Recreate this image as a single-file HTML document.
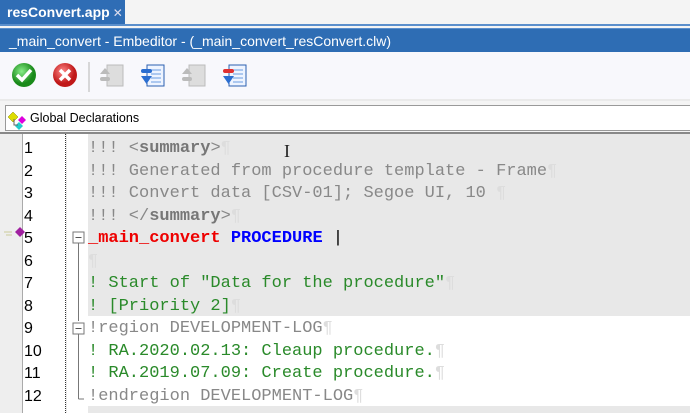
<!DOCTYPE html>
<html><head><meta charset="utf-8"><style>
*{margin:0;padding:0;box-sizing:border-box}
body{width:690px;height:413px;overflow:hidden;background:#f4f4f4;font-family:"Liberation Sans",sans-serif;position:relative}
.abs{position:absolute}
.tab{left:0;top:0;width:125px;height:25px;background:#2f6db5;color:#fff;font-weight:bold;font-size:14px;line-height:25px;padding-left:7px;white-space:nowrap;overflow:hidden}
.tab span{font-weight:normal;font-size:12px;margin-left:3px;color:#dde}
.title{left:0;top:28px;width:690px;height:24px;background:#2e6db4;color:#fff;font-size:14px;line-height:24px;padding-left:9px;border-top:1px solid #5b8fcc}
.tb{left:0;top:52px;width:690px;height:49px;background:#f8f8fc;border-bottom:2px solid #eaeaea}
.combo{left:5px;top:105px;width:690px;height:26px;background:#fff;border:1px solid #999;border-right:none;font-size:12.5px;line-height:24px;padding-left:24px}
.ed{left:0;top:132px;width:690px;height:281px;background:#e8e8e8;border-top:2px solid #888}
.mk{left:0;top:134px;width:23px;height:279px;background:#eeeeee;border-right:1px solid #aaa}
.ln{left:23px;top:134px;width:43px;height:279px;background:#fff;border-right:1px dotted #333}
.fd{left:67px;top:134px;width:21px;height:279px;background:#fff}
.white{left:88px;top:316px;width:602px;height:90px;background:#fff}
.row{position:absolute;height:22.5px;line-height:22.5px;white-space:pre}
.num{left:24px;font-size:16px;color:#000}
.code{left:88px;font-family:"Liberation Mono",monospace;font-size:17px;color:#888}
.g{color:#2a8a2a}.r{color:#e00;font-weight:bold}.b{color:#00f;font-weight:bold}.k{font-weight:bold;color:#777}.p{color:#ddd}
</style></head><body>
<div class="abs tab">resConvert.app<span>✕</span></div>
<div class="abs" style="left:0;top:24px;width:690px;height:2px;background:#5b8fcc"></div>
<div class="abs title">_main_convert - Embeditor - (_main_convert_resConvert.clw)</div>
<div class="abs tb">
<svg width="260" height="49">
<defs><radialGradient id="gg" cx="40%" cy="35%"><stop offset="0" stop-color="#8e8"/><stop offset="1" stop-color="#1a8a1a"/></radialGradient>
<radialGradient id="rg" cx="40%" cy="35%"><stop offset="0" stop-color="#f88"/><stop offset="1" stop-color="#c01818"/></radialGradient></defs>
<circle cx="24" cy="23" r="12" fill="url(#gg)"/><path d="M17 23l5 5 9-10" stroke="#fff" stroke-width="3.5" fill="none"/>
<circle cx="65" cy="23" r="12" fill="url(#rg)"/><path d="M60 18l10 10M70 18l-10 10" stroke="#fff" stroke-width="3.5"/>
<line x1="89" y1="10" x2="89" y2="40" stroke="#ccc" stroke-width="1.5"/>
<g fill="#ddd" stroke="#bbb"><rect x="107" y="13" width="16" height="21"/><rect x="189" y="13" width="16" height="21"/></g>
<g fill="#bbb"><path d="M100 22l5-6 5 6z"/><rect x="100" y="25" width="10" height="4" rx="2"/><path d="M182 22l5-6 5 6z"/><rect x="182" y="25" width="10" height="4" rx="2"/></g>
<g fill="#eef4ff" stroke="#2b5fb0"><rect x="147" y="13" width="17" height="21"/><rect x="229" y="13" width="17" height="21"/></g>
<g stroke="#6a9be0"><path d="M151 18h10M151 22h10M151 26h10M151 30h10M233 18h10M233 22h10M233 26h10M233 30h10"/></g>
<rect x="141" y="17" width="11" height="4" rx="2" fill="#2b6ed0"/><path d="M141 24h11l-5.5 8z" fill="#2b6ed0"/>
<rect x="223" y="17" width="11" height="4" rx="2" fill="#e03030"/><path d="M223 24h11l-5.5 8z" fill="#2b6ed0"/>
</svg></div>
<div class="abs combo">Global Declarations</div>
<svg class="abs" style="left:8px;top:110px" width="22" height="20"><path d="M5 2l5 5-5 5-5-5z" fill="#dd0" stroke="#880" stroke-width=".5"/><path d="M14 6l4 4-4 4-4-4z" fill="#d0d"/><path d="M11 12l4 4-4 4-4-4z" fill="#2cc"/><path d="M6 9v6h4" stroke="#666" fill="none"/></svg>
<div class="abs ed"></div>
<div class="abs white"></div>
<div class="abs mk"></div><div class="abs ln"></div><div class="abs fd"></div>
<svg class="abs" style="left:0;top:134px" width="88" height="279">
<path d="M15 98l5-5 5 5-5 5z" fill="#a020a0"/><path d="M4 98h8M6 101h6" stroke="#cc9" />
<rect x="73" y="98" width="11" height="11" fill="#fff" stroke="#777"/><path d="M75.5 103.5h6" stroke="#555"/>
<line x1="78.5" y1="109" x2="78.5" y2="187" stroke="#777"/>
<rect x="73" y="189" width="11" height="11" fill="#fff" stroke="#777"/><path d="M75.5 194.5h6" stroke="#555"/>
<line x1="78.5" y1="200" x2="78.5" y2="265" stroke="#777"/><line x1="78.5" y1="265" x2="84" y2="265" stroke="#777"/>
</svg>
<div style="position:absolute;left:0;top:138px;width:690px">
<div class="row num" style="top:0">1</div><div class="row num" style="top:22.5px">2</div><div class="row num" style="top:45px">3</div><div class="row num" style="top:67.5px">4</div><div class="row num" style="top:90px">5</div><div class="row num" style="top:112.5px">6</div><div class="row num" style="top:135px">7</div><div class="row num" style="top:157.5px">8</div><div class="row num" style="top:180px">9</div><div class="row num" style="top:202.5px">10</div><div class="row num" style="top:225px">11</div><div class="row num" style="top:247.5px">12</div>
<div class="row code" style="top:0">!!! &lt;<span class="k">summary</span>&gt;<span class="p">¶</span></div>
<div class="row code" style="top:22.5px">!!! Generated from procedure template - Frame<span class="p">¶</span></div>
<div class="row code" style="top:45px">!!! Convert data [CSV-01]; Segoe UI, 10 <span class="p">¶</span></div>
<div class="row code" style="top:67.5px">!!! &lt;/<span class="k">summary</span>&gt;<span class="p">¶</span></div>
<div class="row code" style="top:90px"><span class="r">_main_convert</span> <span class="b">PROCEDURE</span> <span style="color:#000">|</span></div>
<div class="row code" style="top:112.5px"><span class="p">¶</span></div>
<div class="row code g" style="top:135px">! Start of "Data for the procedure"<span class="p">¶</span></div>
<div class="row code g" style="top:157.5px">! [Priority 2]<span class="p">¶</span></div>
<div class="row code" style="top:180px">!region DEVELOPMENT-LOG<span class="p">¶</span></div>
<div class="row code g" style="top:202.5px">! RA.2020.02.13: Cleaup procedure.<span class="p">¶</span></div>
<div class="row code g" style="top:225px">! RA.2019.07.09: Create procedure.<span class="p">¶</span></div>
<div class="row code" style="top:247.5px">!endregion DEVELOPMENT-LOG<span class="p">¶</span></div>
</div>
<div class="abs" style="left:284px;top:141px;font-size:18px;color:#222;font-family:'Liberation Serif',serif">I</div>
</body></html>
